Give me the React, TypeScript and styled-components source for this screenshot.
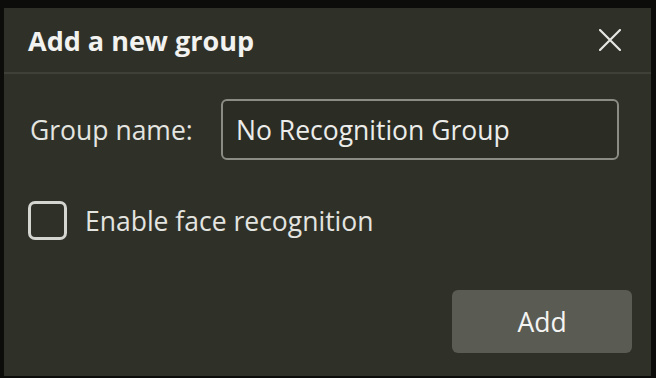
import styled, { createGlobalStyle } from "styled-components";

const GlobalStyle = createGlobalStyle`
  html, body {
    margin: 0;
    padding: 0;
    background: #0c0d0a;
  }
  body {
    font-family: "Open Sans", "Noto Sans", sans-serif;
    width: 656px;
    height: 378px;
    overflow: hidden;
  }
`;

const Frame = styled.div`
  padding: 8px 5px 2px 4px;
  height: 378px;
  box-sizing: border-box;
`;

const Dialog = styled.div`
  display: flex;
  flex-direction: column;
  height: 100%;
  background: #2f3128;
  color: #e6e6e2;
`;

const Header = styled.div`
  display: flex;
  align-items: center;
  justify-content: space-between;
  height: 64px;
  padding: 0 26px 0 24px;
  border-bottom: 2px solid #3f4138;
`;

const Title = styled.h1`
  margin: 0;
  font-size: 27px;
  font-weight: 700;
  color: #f2f2f0;
`;

const CloseButton = styled.button`
  display: flex;
  align-items: center;
  justify-content: center;
  width: 30px;
  height: 30px;
  padding: 0;
  border: none;
  background: transparent;
  cursor: pointer;
`;

const Body = styled.div`
  display: flex;
  flex-direction: column;
  flex: 1;
  padding: 25px 19px 23px 24px;
`;

const FieldRow = styled.div`
  display: flex;
  align-items: center;
`;

const Label = styled.label`
  width: 193px;
  padding-left: 2px;
  box-sizing: border-box;
  font-size: 26.5px;
  color: #e4e4e0;
`;

const TextInput = styled.input`
  width: 398px;
  height: 61px;
  box-sizing: border-box;
  padding: 0 13px;
  border: 2.5px solid #8b8d85;
  border-radius: 6px;
  background: #2b2d25;
  color: #ececea;
  font-family: inherit;
  font-size: 26.5px;
  outline: none;
`;

const CheckRow = styled.label`
  display: flex;
  align-items: center;
  gap: 18px;
  margin-top: 41px;
  font-size: 26.5px;
  color: #e4e4e0;
`;

const CheckBox = styled.span`
  width: 39px;
  height: 39px;
  box-sizing: border-box;
  border: 3px solid #d4d4d0;
  border-radius: 7px;
`;

const Footer = styled.div`
  display: flex;
  justify-content: flex-end;
  margin-top: auto;
`;

const PrimaryButton = styled.button`
  width: 180px;
  height: 63px;
  border: none;
  border-radius: 6px;
  background: #5a5b53;
  color: #f4f4f2;
  font-family: inherit;
  font-size: 26.5px;
  cursor: pointer;
`;

const App = () => {
  return (
    <>
      <GlobalStyle />
      <Frame>
        <Dialog>
          <Header>
            <Title>Add a new group</Title>
            <CloseButton aria-label="Close">
              <svg width="22" height="22" viewBox="0 0 22 22">
                <path d="M1 1 L21 21 M21 1 L1 21" stroke="#e6e6e2" strokeWidth="2.2" strokeLinecap="round" />
              </svg>
            </CloseButton>
          </Header>
          <Body>
            <FieldRow>
              <Label>Group name:</Label>
              <TextInput defaultValue="No Recognition Group" />
            </FieldRow>
            <CheckRow>
              <CheckBox />
              Enable face recognition
            </CheckRow>
            <Footer>
              <PrimaryButton>Add</PrimaryButton>
            </Footer>
          </Body>
        </Dialog>
      </Frame>
    </>
  );
};

export default App;
